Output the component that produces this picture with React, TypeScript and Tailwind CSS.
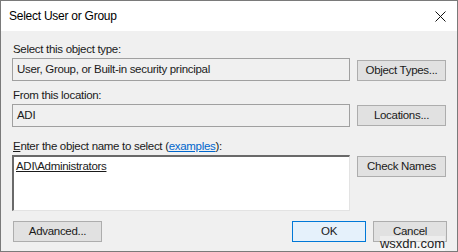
import React from "react";

const font = { fontFamily: '"Liberation Sans", Arial, sans-serif' };

function Btn({ children, className = "" }: { children: React.ReactNode; className?: string }) {
  return (
    <button
      className={`h-[21px] border border-[#adadad] bg-[#e1e1e1] text-[11.5px] tracking-[-0.3px] text-[#1a1a1a] flex items-center justify-center ${className}`}
    >
      {children}
    </button>
  );
}

export default function App() {
  return (
    <div className="w-[458px] h-[252px] bg-white" style={font}>
      <div className="w-full h-full border border-[#7a7a7a] flex flex-col">
        {/* title bar */}
        <div className="h-[30px] bg-white flex items-center justify-between pl-[8px] pr-[10px]">
          <span className="text-[12px] tracking-[-0.25px] text-black">Select User or Group</span>
          <svg width="11" height="11" viewBox="0 0 11 11" className="mr-[1px]">
            <path d="M0.5 0.5 L10.5 10.5 M10.5 0.5 L0.5 10.5" stroke="#111" strokeWidth="1" />
          </svg>
        </div>

        {/* body */}
        <div className="flex-1 bg-[#f0f0f0] pl-[11px] pr-[10px] pt-[11px] relative text-[11.5px] tracking-[-0.3px] text-[#1a1a1a]">
          <div className="pl-px leading-[15px]">Select this object type:</div>
          <div className="flex items-end gap-[7px] mt-px">
            <div className="w-[338px] h-[23px] border border-[#a0a0a0] bg-[#f0f0f0] flex items-center pl-[4px]">
              User, Group, or Built-in security principal
            </div>
            <Btn className="w-[89px] h-[20px]">Object Types...</Btn>
          </div>

          <div className="pl-px leading-[15px] mt-[7px]">From this location:</div>
          <div className="flex items-end gap-[7px] mt-[1px]">
            <div className="w-[338px] h-[23px] border border-[#a0a0a0] bg-[#f0f0f0] flex items-center pl-[4px]">
              ADI
            </div>
            <Btn className="w-[89px] h-[21px] mb-px">Locations...</Btn>
          </div>

          <div className="pl-px leading-[15px] mt-[12px]">
            <span className="underline">E</span>nter the object name to select (
            <span className="text-[#0066cc] underline">examples</span>):
          </div>
          <div className="flex items-start gap-[7px] mt-px">
            <div className="w-[338px] h-[56px] border-t-2 border-l-2 border-[#696969] border-r border-b border-r-[#e3e3e3] border-b-[#e3e3e3] bg-white pl-[2px] pt-[1px]">
              <span className="underline">ADI\Administrators</span>
            </div>
            <Btn className="w-[89px] h-[21px] mt-px">Check Names</Btn>
          </div>

          <div className="flex items-center mt-[10px]">
            <Btn className="w-[89px] h-[21px] ml-px">Advanced...</Btn>
            <div className="flex-1" />
            <button className="w-[74px] h-[21px] border border-[#0078d7] bg-[#e5f1fb] text-[11.5px] tracking-[-0.3px] text-[#1a1a1a] flex items-center justify-center">
              OK
            </button>
            <Btn className="w-[74px] h-[21px] ml-[7px]">Cancel</Btn>
          </div>

          <span className="absolute right-[12px] bottom-[0px] text-[13px] leading-[15px] tracking-[0px] text-[#222] bg-white/40">
            wsxdn.com
          </span>
        </div>
      </div>
    </div>
  );
}
